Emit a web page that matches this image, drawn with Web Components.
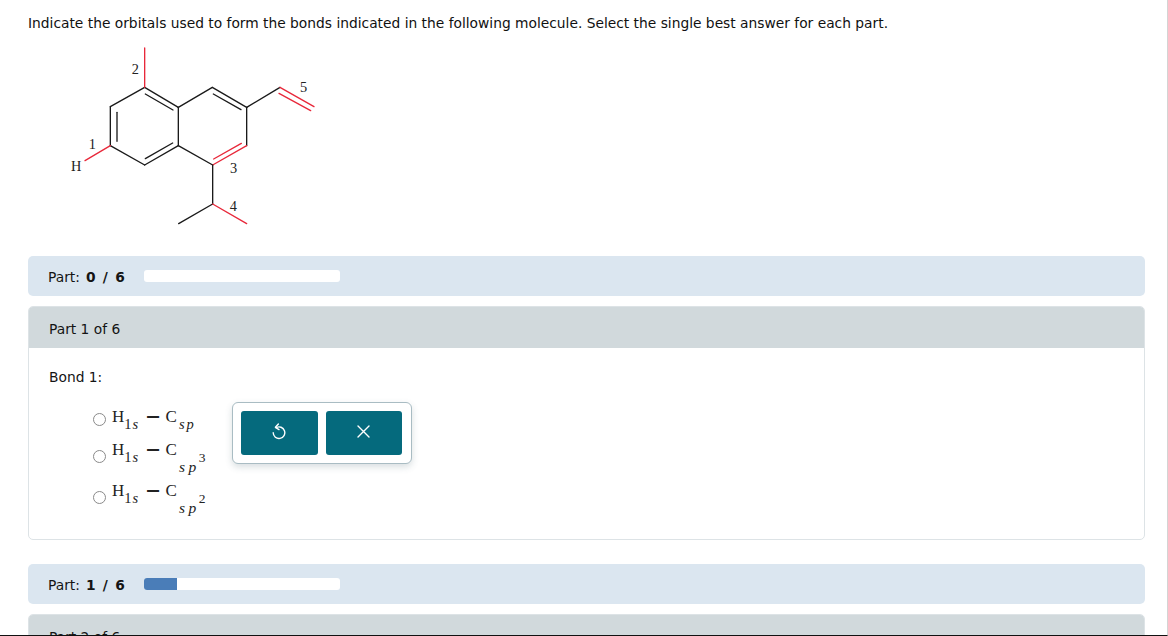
<!DOCTYPE html>
<html><head><meta charset="utf-8"><style>html,body{margin:0;background:#fff}</style></head><body>
<app-frame>
  <question-text>Indicate the orbitals used to form the bonds indicated in the following molecule. Select the single best answer for each part.</question-text>
  <molecule-diagram></molecule-diagram>
  <part-progress label="0 / 6" pct="0"></part-progress>
  <part-card title="Part 1 of 6">
    <div>Bond 1:</div>
    <orbital-option sub="sp" style="margin-top:19px"></orbital-option>
    <orbital-option sub="sp" sup="3"></orbital-option>
    <orbital-option sub="sp" sup="2"></orbital-option>
    <action-popup></action-popup>
  </part-card>
  <part-progress label="1 / 6" pct="17" style="margin-top:24px"></part-progress>
  <part-card title="Part 2 of 6" collapsed></part-card>
</app-frame>
<script>
function def(name, html){
  customElements.define(name, class extends HTMLElement{
    connectedCallback(){
      if(this.shadowRoot) return;
      const r=this.attachShadow({mode:'open'});
      r.innerHTML=typeof html==='function'?html(this):html;
    }
  });
}
def('app-frame',`<style>:host{display:block;box-sizing:border-box;width:1168px;height:636px;overflow:hidden;border-right:1px solid #d4d4d4;border-bottom:1px solid #111;padding:0 22px 0 28px;font:13.8px "DejaVu Sans",sans-serif;color:#141414}</style><slot></slot>`);
def('question-text',`<style>:host{display:block;padding-top:15px;line-height:17px;height:17px;white-space:nowrap;color:#111}</style><slot></slot>`);
def('molecule-diagram',`<style>:host{display:block;height:224px}svg{display:block;margin-left:12px;overflow:visible}
line{stroke:#1a1a1a;stroke-width:4;stroke-linecap:round}.r{stroke:#e8283a}text{font:43px "Liberation Serif",serif;fill:#222}</style>
<svg width="300" height="208" viewBox="0 6 900 624">
<line x1="314" y1="172" x2="415" y2="232"/><line x1="415" y1="232" x2="415" y2="347"/><line x1="415" y1="347" x2="314" y2="405"/><line x1="314" y1="405" x2="211" y2="347"/><line x1="211" y1="347" x2="211" y2="230"/><line x1="211" y1="230" x2="314" y2="172"/>
<line x1="231" y1="247" x2="231" y2="334"/><line x1="316" y1="192" x2="399" y2="240"/><line x1="316" y1="386" x2="398" y2="339"/>
<line x1="415" y1="232" x2="517" y2="172"/><line x1="517" y1="172" x2="620" y2="232"/><line x1="520" y1="192" x2="603" y2="239"/><line x1="620" y1="232" x2="620" y2="347"/><line x1="415" y1="347" x2="518" y2="405"/>
<line x1="620" y1="232" x2="720" y2="172"/>
<line class="r" x1="518" y1="405" x2="620" y2="347"/><line class="r" x1="521" y1="387" x2="604" y2="340"/>
<line class="r" x1="720" y1="172" x2="822" y2="230"/><line class="r" x1="717" y1="190" x2="812" y2="242"/>
<line class="r" x1="314" y1="172" x2="314" y2="54"/><line class="r" x1="211" y1="347" x2="135" y2="392"/>
<line x1="518" y1="405" x2="518" y2="522"/><line x1="518" y1="522" x2="416" y2="581"/><line class="r" x1="518" y1="522" x2="620" y2="581"/>
<text x="275" y="133">2</text><text x="780" y="186">5</text><text x="146" y="358">1</text><text x="93" y="423">H</text><text x="570" y="430">3</text><text x="569" y="542">4</text>
</svg>`);
def('part-progress',el=>`<style>:host{display:flex;align-items:center;height:40px;box-sizing:border-box;background:#dbe6f0;border-radius:5px;padding-left:20px}
b{font-weight:700;margin-left:6px;word-spacing:2.5px}.t{width:89px;white-space:nowrap;padding-top:2px}.bar{width:196px;height:12px;margin-left:7px;background:#fff;border-radius:3px;overflow:hidden}.f{height:100%;background:#4a7db8;width:${el.getAttribute('pct')}%}</style>
<div class="t">Part:<b>${el.getAttribute('label')}</b></div><div class="bar"><div class="f"></div></div>`);
def('part-card',el=>`<style>:host{display:block;position:relative;box-sizing:border-box;margin-top:10px;border:1px solid #dde3e6;border-radius:5px;${el.hasAttribute('collapsed')?'':'height:234px;'}}
.h{background:#d1d9dc;height:41px;line-height:44px;padding-left:20px;border-radius:4px 4px 0 0}
.b{padding:21px 20px 0;line-height:17px}${el.hasAttribute('collapsed')?'.b{display:none}':''}</style>
<div class="h">${el.getAttribute('title')}</div><div class="b"><slot></slot></div>`);
def('orbital-option',el=>{
 const sup=el.getAttribute('sup');
 return `<style>:host{display:flex;align-items:flex-start;height:${sup==='3'?41:37}px;margin-left:44px;color:#222}
.rd{width:11px;height:11px;border:1.2px solid #8a8a8a;border-radius:50%;margin-top:8px;margin-right:6px;flex:none}
.f{white-space:nowrap;font:17px/20px "Liberation Serif",serif;margin-top:${sup?-2:2}px}
.s{font-size:14.5px;vertical-align:-7px;letter-spacing:1px}
.m{margin:0 6px 0 7px;font-family:"DejaVu Sans",sans-serif;font-weight:700;font-size:16px;display:inline-block;transform:scaleX(1.2)}
.c{font-style:italic;font-size:${sup?15.5:14.5}px;vertical-align:${sup?-17:-7}px;margin-left:2px;letter-spacing:${sup?3.5:2}px}
.e{font-size:13.5px;vertical-align:${sup?-7:0}px;margin-left:-1px}</style>
<div class="rd"></div><div class="f">H<span class="s">1<i>s</i></span><span class="m">−</span>C<span class="c">${el.getAttribute('sub')}</span>${sup?`<span class="e">${sup}</span>`:''}</div>`});
def('action-popup',`<style>:host{position:absolute;left:203px;top:95px;box-sizing:border-box;width:180px;height:62px;padding:8px 9px 8px 8px;display:flex;gap:8px;background:#fff;border:1px solid #a9bcc3;border-radius:6px;box-shadow:0 3px 7px rgba(60,90,100,.2)}
button{flex:1;border:0;border-radius:3px;background:#056a7d;padding:0 0 3px;display:flex;align-items:center;justify-content:center}svg{display:block}</style>
<button aria-label="Undo"><svg width="14" height="17" viewBox="0 0 14 17" fill="none" stroke="#fff" stroke-width="1.4" stroke-linecap="round" stroke-linejoin="round"><path d="M4.2 4.6A5.8 5.8 0 1 1 1.2 9.8"/><path d="M6.4 1 3.4 4.3 7 6.6"/></svg></button>
<button aria-label="Close"><svg width="13" height="13" viewBox="0 0 13 13" stroke="#fff" stroke-width="1.4" stroke-linecap="round"><path d="M1 1 12 12M12 1 1 12"/></svg></button>`);
</script>
</body></html>
